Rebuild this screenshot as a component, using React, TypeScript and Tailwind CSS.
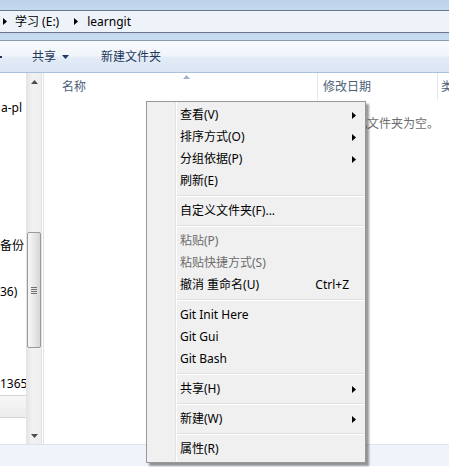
import React from "react";

const FONT = "font-['Noto_Sans','Noto_Sans_CJK_SC',sans-serif]";

function RightTri({ className = "" }: { className?: string }) {
  return (
    <svg width="4" height="7" viewBox="0 0 4 7" className={className}>
      <path d="M0 0 L4 3.5 L0 7 Z" fill="#000" />
    </svg>
  );
}

function DownTri({ color = "#1e395b" }: { color?: string }) {
  return (
    <svg width="7" height="4" viewBox="0 0 7 4">
      <path d="M0 0 H7 L3.5 4 Z" fill={color} />
    </svg>
  );
}

function UpTri({ color = "#4d4d4d" }: { color?: string }) {
  return (
    <svg width="7" height="4" viewBox="0 0 7 4">
      <path d="M0 4 H7 L3.5 0 Z" fill={color} />
    </svg>
  );
}

type Item =
  | { kind: "item"; label: string; sub?: boolean; disabled?: boolean; hotkey?: string }
  | { kind: "sep" };

const items: Item[] = [
  { kind: "item", label: "查看(V)", sub: true },
  { kind: "item", label: "排序方式(O)", sub: true },
  { kind: "item", label: "分组依据(P)", sub: true },
  { kind: "item", label: "刷新(E)" },
  { kind: "sep" },
  { kind: "item", label: "自定义文件夹(F)..." },
  { kind: "sep" },
  { kind: "item", label: "粘贴(P)", disabled: true },
  { kind: "item", label: "粘贴快捷方式(S)", disabled: true },
  { kind: "item", label: "撤消 重命名(U)", hotkey: "Ctrl+Z" },
  { kind: "sep" },
  { kind: "item", label: "Git Init Here" },
  { kind: "item", label: "Git Gui" },
  { kind: "item", label: "Git Bash" },
  { kind: "sep" },
  { kind: "item", label: "共享(H)", sub: true },
  { kind: "sep" },
  { kind: "item", label: "新建(W)", sub: true },
  { kind: "sep" },
  { kind: "item", label: "属性(R)" },
];

function ContextMenu() {
  return (
    <div className="absolute left-[146px] top-[101px] w-[220px] h-[362px] border border-[#979797] py-[2px] shadow-[3px_3px_2px_rgba(0,0,0,0.4)] bg-[linear-gradient(to_right,#f0f0f0_28px,#e2e3e3_28px,#e2e3e3_29px,#ffffff_29px,#ffffff_30px,#f0f0f0_30px)]">
      {items.map((it, i) =>
        it.kind === "sep" ? (
          <div key={i} className="h-[8px] pt-[3px] pl-[30px] pr-[1px]">
            <div className="h-[1px] bg-[#e0e0e0]" />
            <div className="h-[1px] bg-white" />
          </div>
        ) : (
          <div
            key={i}
            className={`h-[22px] flex items-center pl-[33px] pr-[9px] leading-[22px] whitespace-nowrap ${
              it.disabled ? "text-[#6d6d6d]" : "text-black"
            }`}
          >
            <span>{it.label}</span>
            {it.hotkey && <span className="ml-auto mr-[7px]">{it.hotkey}</span>}
            {it.sub && <RightTri className="ml-auto" />}
          </div>
        )
      )}
    </div>
  );
}

function LeftPane() {
  return (
    <div className="w-[26px] shrink-0 bg-white overflow-hidden flex flex-col">
      <div className="mt-[26px] h-[18px] leading-[18px] whitespace-nowrap pl-[1px]">a-pl</div>
      <div className="mt-[120px] h-[18px] leading-[18px] whitespace-nowrap">备份</div>
      <div className="mt-[28px] h-[18px] leading-[18px] whitespace-nowrap">36)</div>
      <div className="mt-[74px] h-[18px] leading-[18px] whitespace-nowrap">1365</div>
      <div className="mt-[2px] h-[23px] border-y border-[#d5d5d5] bg-[linear-gradient(#f7f7f7,#ececec)]" />
    </div>
  );
}

function ScrollBar() {
  return (
    <div className="w-[16px] shrink-0 flex flex-col border-x border-[#e3e3e3] bg-[linear-gradient(to_right,#e6e6e6,#f2f2f2_40%,#eeeeee)]">
      <div className="h-[17px] flex items-center justify-center">
        <UpTri />
      </div>
      <div className="h-[142px]" />
      <div className="h-[116px] rounded-[2px] border border-[#9a9a9a] bg-[linear-gradient(to_right,#f6f6f6,#e9e9e9_50%,#d6d6d6)] flex flex-col items-center justify-center gap-[1px]">
        <div className="w-[6px] h-[1px] bg-[#707070]" />
        <div className="w-[6px] h-[1px] bg-[#707070]" />
        <div className="w-[6px] h-[1px] bg-[#707070]" />
        <div className="w-[6px] h-[1px] bg-[#707070]" />
      </div>
      <div className="flex-1" />
      <div className="h-[17px] flex items-center justify-center">
        <DownTri color="#4d4d4d" />
      </div>
    </div>
  );
}

function RightPane() {
  return (
    <div className="flex-1 min-w-0 overflow-hidden bg-white flex flex-col">
      <div className="h-[27px] flex text-[#4c607a]">
        <div className="relative w-[273px] shrink-0 pl-[18px] flex items-center">
          名称
          <div className="absolute left-[139px] top-[2px]">
            <UpTri color="#9fb3cc" />
          </div>
        </div>
        <div className="w-[120px] shrink-0 border-l border-[#e3e8ef] pl-[5px] flex items-center">修改日期</div>
        <div className="flex-1 border-l border-[#e3e8ef] pl-[3px] flex items-center whitespace-nowrap">类</div>
      </div>
      <div className="mt-[15px] ml-[311px] h-[18px] leading-[18px] text-[#6d6d6d] whitespace-nowrap">
        此文件夹为空。
      </div>
    </div>
  );
}

export default function App() {
  return (
    <div className={`relative w-[449px] h-[467px] overflow-hidden bg-white text-[12px] text-black ${FONT}`}>
      {/* title band */}
      <div className="h-[10px] bg-[linear-gradient(#bcd3eb,#c4d9ef)]" />
      {/* address bar */}
      <div className="h-[23px] border-y border-[#6a7686] bg-[#eef3fa] flex items-center">
        <RightTri className="ml-[3px]" />
        <span className="ml-[8px]">学习 (E:)</span>
        <RightTri className="ml-[15px]" />
        <span className="ml-[9px]">learngit</span>
      </div>
      <div className="h-[7px] bg-[linear-gradient(#c2d7ee,#c9dcf1)]" />
      {/* toolbar */}
      <div className="h-[33px] border-t border-[#8a9bb0] border-b border-b-[#a8c0dc] bg-[linear-gradient(#f7fafd,#f0f5fb_48%,#e3ecf7_52%,#dbe6f4)] flex items-center text-[#1e395b]">
        <div className="w-[2px] h-[2px] bg-[#1e395b]" />
        <span className="ml-[30px]">共享</span>
        <span className="ml-[6px] flex items-center">
          <DownTri />
        </span>
        <span className="ml-[32px]">新建文件夹</span>
      </div>
      {/* main */}
      <div className="h-[372px] flex border-b border-[#dbe5f1]">
        <LeftPane />
        <ScrollBar />
        <div className="w-[1px] shrink-0 bg-white" />
        <div className="w-[1px] shrink-0 bg-[#d9e3ee]" />
        <RightPane />
      </div>
      {/* details pane */}
      <div className="h-[21px] bg-[#f0f4fa]" />
      <ContextMenu />
    </div>
  );
}
